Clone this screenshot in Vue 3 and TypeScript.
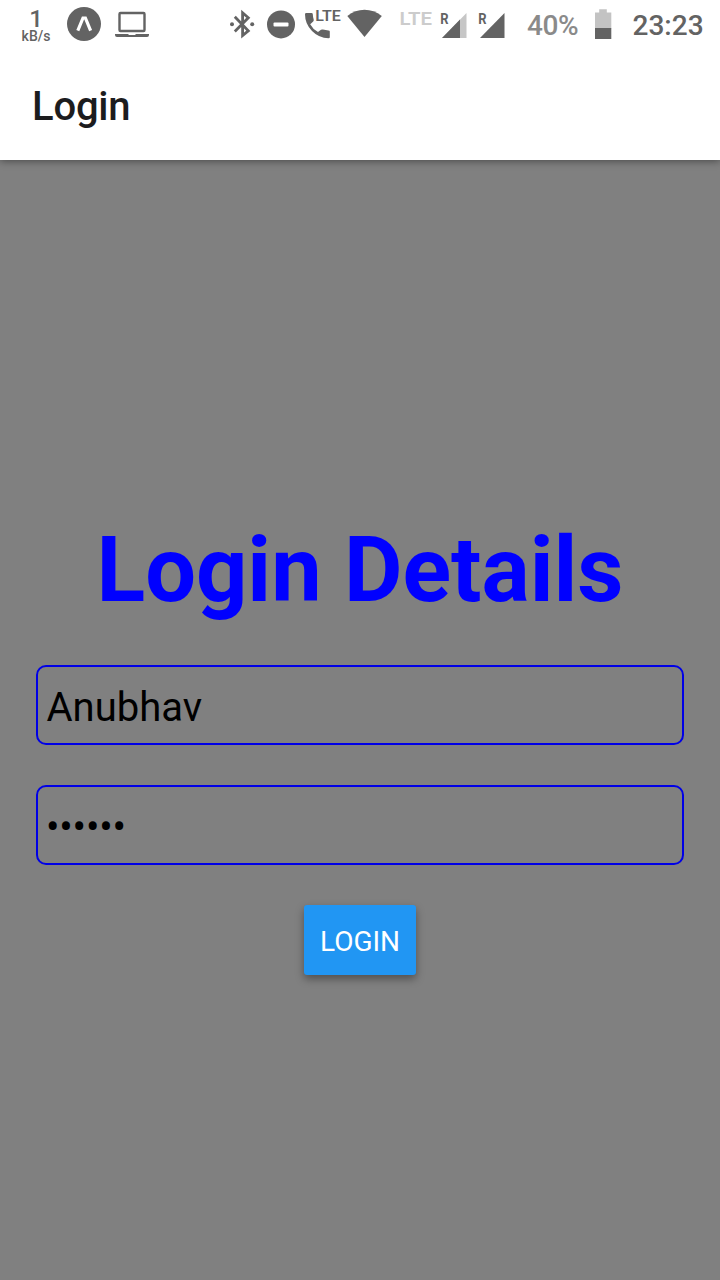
<script setup lang="ts">
import { ref } from 'vue'

const username = ref('Anubhav')
const password = ref('••••••')
</script>

<template>
  <div class="screen">
    <div class="status">
      <div class="speed"><span class="speed-num">1</span><span class="speed-unit">kB/s</span></div>
      <svg class="expo" width="34" height="48" viewBox="67 0 34 48">
        <circle cx="84" cy="24" r="17" fill="#636363" />
        <path d="M77.8 30.6L83 18H85.4L90.6 30.6" fill="none" stroke="#fff" stroke-width="3.2" />
      </svg>
      <svg class="laptop" width="34" height="48" viewBox="115 0 34 48">
        <rect x="119.5" y="13" width="25" height="18" rx="1" fill="none" stroke="#636363" stroke-width="2.4" />
        <path d="M115 34H128.5V35H135.5V34H149V35Q149 37 147 37H117Q115 37 115 35Z" fill="#636363" />
      </svg>
      <svg class="bluetooth" width="26" height="48" viewBox="229 0 26 48">
        <path d="M234.8 16.8L248.3 30.8L242.6 35.6V12.8L248.3 17.8L234.8 31.4" fill="none" stroke="#636363" stroke-width="2.8" />
        <circle cx="232" cy="24.3" r="2" fill="#636363" />
        <circle cx="252.2" cy="24.3" r="2" fill="#636363" />
      </svg>
      <svg class="dnd" width="28" height="48" viewBox="267 0 28 48">
        <circle cx="281" cy="24.4" r="14" fill="#636363" />
        <rect x="273.5" y="22.5" width="15" height="4" rx="1" fill="#fff" />
      </svg>
      <svg class="call" width="38" height="48" viewBox="304 0 38 48">
        <path d="M306.3 13H311.5Q312.7 13 312.8 14.3Q312.9 17 313.7 19.6Q314 20.6 313.2 21.4L310.2 24.2Q312.9 29.3 318 32.1L321 29.8Q321.8 29.2 322.9 29.5Q325.6 30.2 328.5 30.4Q329.8 30.5 329.8 31.6V37.2Q329.8 38.3 328.5 38.3Q318.8 38 312 31Q305 24 305 14.3Q305 13 306.3 13Z" fill="#636363" />
        <text x="315.2" y="21.3" font-size="15.5" font-weight="600" textLength="25.6" lengthAdjust="spacingAndGlyphs" fill="#636363">LTE</text>
      </svg>
      <svg class="wifi" width="36" height="48" viewBox="347 0 36 48">
        <path d="M347.3 16Q355 9.7 364.5 9.7Q374 9.7 381.8 16L364.5 37Z" fill="#636363" />
      </svg>
      <svg class="lte" width="34" height="48" viewBox="399 0 34 48">
        <text x="399.5" y="24.6" font-size="19" font-weight="600" textLength="32.6" lengthAdjust="spacingAndGlyphs" fill="#ccc">LTE</text>
      </svg>
      <svg class="signal" width="27" height="48" viewBox="440 0 27 48">
        <path d="M442 38L466.5 13V38Z" fill="#c6c6c6" />
        <path d="M442 38L460 19.6V38Z" fill="#636363" />
        <text x="440.3" y="23.5" font-size="14.5" font-weight="700" textLength="8.3" lengthAdjust="spacingAndGlyphs" fill="#636363">R</text>
      </svg>
      <svg class="signal-full" width="27" height="48" viewBox="478 0 27 48">
        <path d="M480 38L504.5 13V38Z" fill="#636363" />
        <text x="478.3" y="23.5" font-size="14.5" font-weight="700" textLength="8.3" lengthAdjust="spacingAndGlyphs" fill="#636363">R</text>
      </svg>
      <span class="percent">40%</span>
      <svg class="battery" width="18" height="48" viewBox="594 0 18 48">
        <path d="M595 12.5H599.2V9.3H606.8V12.5H611.3V28.5H595Z" fill="#c3c3c3" />
        <rect x="595" y="28" width="16.3" height="11" fill="#636363" />
      </svg>
      <span class="clock">23:23</span>
    </div>
    <header class="header">Login</header>
    <main class="body">
      <h1 class="title">Login Details</h1>
      <div class="field">{{ username }}</div>
      <div class="field dots">{{ password }}</div>
      <button class="submit" type="button">LOGIN</button>
    </main>
  </div>
</template>

<style>
body {
  margin: 0;
  background: #808080;
}
</style>

<style scoped>
.screen {
  width: 720px;
  height: 1280px;
  display: flex;
  flex-direction: column;
  overflow: hidden;
  background: #808080;
  font-family: Roboto, sans-serif;
}
.status {
  height: 48px;
  flex: none;
  display: flex;
  background: #fff;
  color: #636363;
  white-space: nowrap;
  z-index: 2;
}
.status > * {
  flex: none;
}
.speed {
  width: 36px;
  margin-left: 18px;
  padding-top: 9px;
  box-sizing: border-box;
  display: flex;
  flex-direction: column;
  align-items: center;
  font-weight: 500;
}
.speed-num {
  font-size: 24px;
  line-height: 21px;
}
.speed-unit {
  font-size: 14px;
  line-height: 12px;
}
.expo { margin-left: 13px; }
.laptop { margin-left: 14px; }
.bluetooth { margin-left: 80px; }
.dnd { margin-left: 12px; }
.call { margin-left: 9px; }
.wifi { margin-left: 5px; }
.lte { margin-left: 16px; }
.signal { margin-left: 7px; }
.signal-full { margin-left: 11px; }
.percent {
  width: 67px;
  margin-left: 22px;
  font-size: 28px;
  font-weight: 500;
  letter-spacing: -0.4px;
  line-height: 51px;
  color: #8a8a8a;
}
.clock {
  margin-left: 20.5px;
  font-size: 28px;
  font-weight: 500;
  line-height: 51px;
}
.header {
  height: 112px;
  flex: none;
  box-sizing: border-box;
  padding-left: 32px;
  background: #fff;
  color: #1c1c1e;
  font-size: 40px;
  font-weight: 500;
  letter-spacing: -0.2px;
  line-height: 118px;
  box-shadow: 0 1px 8px rgba(0, 0, 0, 0.45);
  z-index: 1;
}
.body {
  flex: 1;
  display: flex;
  flex-direction: column;
  align-items: center;
}
.title {
  margin: 351px 0 0;
  height: 119px;
  font-size: 90px;
  line-height: 120px;
  font-weight: 700;
  color: #00f;
  white-space: nowrap;
}
.field {
  width: 648px;
  height: 80px;
  margin-top: 35px;
  box-sizing: border-box;
  border: 2px solid #0000e6;
  border-radius: 10px;
  padding-left: 8.5px;
  font-size: 40px;
  line-height: 82px;
  color: #000;
}
.field.dots {
  margin-top: 40px;
  padding-left: 8px;
  letter-spacing: -0.2px;
}
.submit {
  width: 112px;
  height: 70px;
  margin-top: 40px;
  border: 0;
  border-radius: 3px;
  padding: 2px 0 0;
  background: #2196f3;
  color: #fff;
  font-family: inherit;
  font-size: 28px;
  box-shadow: 0 4px 9px rgba(0, 0, 0, 0.38);
}
</style>
